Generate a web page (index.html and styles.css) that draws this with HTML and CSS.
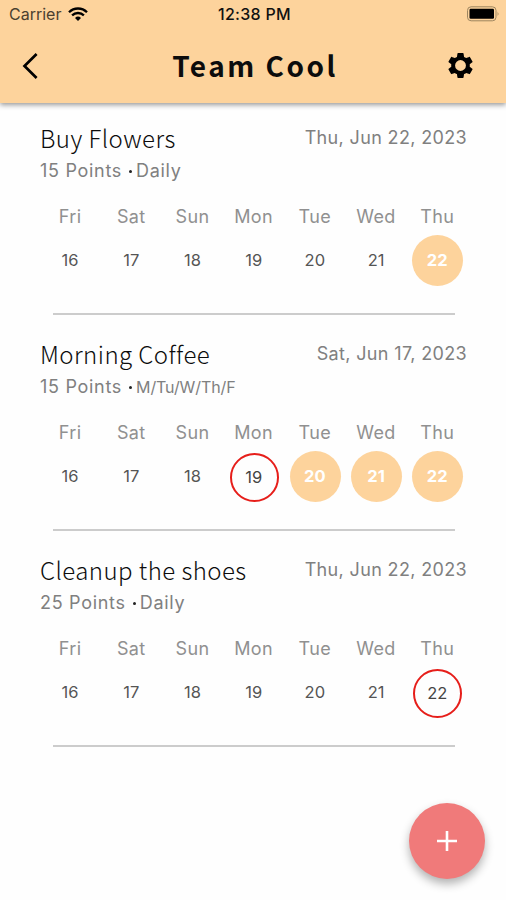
FILE: index.html
```html
<!DOCTYPE html>
<html lang="en">
<head>
    <meta charset="UTF-8">
    <meta name="viewport" content="width=device-width, initial-scale=1.0">
    <title>Team Cool</title>
    <link rel="stylesheet" href="styles.css">
</head>
<body>
    <header class="app-bar">
        <div class="status-bar">
            <div class="carrier">
                <span>Carrier</span>
                <svg class="wifi" width="20" height="14" viewBox="0 0 20 14" fill="none" stroke="#000" stroke-width="2.3">
                    <path d="M1 5.2a12.8 12.8 0 0 1 18 0"/>
                    <path d="M4.1 8.4a8.4 8.4 0 0 1 11.8 0"/>
                    <path d="M10 14l-3-3a4.3 4.3 0 0 1 6 0z" fill="#000" stroke="none"/>
                </svg>
            </div>
            <div class="clock">12:38 PM</div>
            <svg class="battery" width="33" height="16" viewBox="0 0 33 16">
                <rect x="0.5" y="0.8" width="28.5" height="14" rx="3.6" fill="none" stroke="#9d855f"/>
                <rect x="2.5" y="2.8" width="24.5" height="10" rx="1.2" fill="#000"/>
                <path d="M30.6 5.6q1.8 2.2 0 4.4z" fill="#9d855f"/>
            </svg>
        </div>
        <div class="toolbar">
            <svg class="back" width="20" height="28" viewBox="0 0 20 28" fill="none" stroke="#000" stroke-width="2.7">
                <path d="M16.6 2L4.5 14l12.1 12"/>
            </svg>
            <h1>Team Cool</h1>
            <svg class="gear" width="31" height="31" viewBox="0 0 24 24">
                <path d="M19.14 12.94c.04-.3.06-.61.06-.94 0-.32-.02-.64-.07-.94l2.03-1.58c.18-.14.23-.41.12-.61l-1.92-3.32c-.12-.22-.37-.29-.59-.22l-2.39.96c-.5-.38-1.03-.7-1.62-.94l-.36-2.54c-.04-.24-.24-.41-.48-.41h-3.84c-.24 0-.43.17-.47.41l-.36 2.54c-.59.24-1.13.57-1.62.94l-2.39-.96c-.22-.08-.47 0-.59.22L2.74 8.87c-.12.21-.08.47.12.61l2.03 1.58c-.05.3-.09.63-.09.94s.02.64.07.94l-2.03 1.58c-.18.14-.23.41-.12.61l1.92 3.32c.12.22.37.29.59.22l2.39-.96c.5.38 1.03.7 1.62.94l.36 2.54c.05.24.24.41.48.41h3.84c.24 0 .44-.17.47-.41l.36-2.54c.59-.24 1.13-.56 1.62-.94l2.39.96c.22.08.47 0 .59-.22l1.92-3.32c.12-.22.07-.47-.12-.61l-2.01-1.58zM12 16.2a4.2 4.2 0 1 1 0-8.4 4.2 4.2 0 0 1 0 8.4z"/>
            </svg>
        </div>
    </header>

    <main class="tasks">
        <section class="task">
            <div class="task-head">
                <h2>Buy Flowers</h2>
                <span class="date">Thu, Jun 22, 2023</span>
            </div>
            <div class="details"><span>15 Points</span><i class="dot"></i><span>Daily</span></div>
            <div class="week">
                <span>Fri</span><span>Sat</span><span>Sun</span><span>Mon</span><span>Tue</span><span>Wed</span><span>Thu</span>
            </div>
            <div class="days">
                <span class="day">16</span>
                <span class="day">17</span>
                <span class="day">18</span>
                <span class="day">19</span>
                <span class="day">20</span>
                <span class="day">21</span>
                <span class="day done">22</span>
            </div>
            <hr>
        </section>

        <section class="task">
            <div class="task-head">
                <h2>Morning Coffee</h2>
                <span class="date">Sat, Jun 17, 2023</span>
            </div>
            <div class="details"><span>15 Points</span><i class="dot"></i><span class="repeat">M/Tu/W/Th/F</span></div>
            <div class="week">
                <span>Fri</span><span>Sat</span><span>Sun</span><span>Mon</span><span>Tue</span><span>Wed</span><span>Thu</span>
            </div>
            <div class="days">
                <span class="day">16</span>
                <span class="day">17</span>
                <span class="day">18</span>
                <span class="day missed">19</span>
                <span class="day done">20</span>
                <span class="day done">21</span>
                <span class="day done">22</span>
            </div>
            <hr>
        </section>

        <section class="task">
            <div class="task-head">
                <h2>Cleanup the shoes</h2>
                <span class="date">Thu, Jun 22, 2023</span>
            </div>
            <div class="details"><span>25 Points</span><i class="dot"></i><span>Daily</span></div>
            <div class="week">
                <span>Fri</span><span>Sat</span><span>Sun</span><span>Mon</span><span>Tue</span><span>Wed</span><span>Thu</span>
            </div>
            <div class="days">
                <span class="day">16</span>
                <span class="day">17</span>
                <span class="day">18</span>
                <span class="day">19</span>
                <span class="day">20</span>
                <span class="day">21</span>
                <span class="day missed">22</span>
            </div>
            <hr>
        </section>
    </main>

    <button class="add" aria-label="Add task">
        <svg width="20" height="20" viewBox="0 0 20 20" stroke="#fff" stroke-width="2.6">
            <path d="M10 0v20M0 10h20"/>
        </svg>
    </button>
</body>
</html>
```
FILE: styles.css
```css
* {
    box-sizing: border-box;
}
body {
    margin: 0;
    height: 900px;
    overflow: hidden;
    background-color: #fefefe;
    font-family: Inter, sans-serif;
    color: #808080;
}
h1, h2 {
    margin: 0;
    font-family: "Noto Sans CJK JP", "Noto Sans", sans-serif;
    color: #0c0c0c;
    white-space: nowrap;
}
.app-bar {
    height: 103px;
    background-color: #fdd39c;
    box-shadow: 0 2px 5px rgba(0, 0, 0, 0.4);
}
.status-bar {
    display: grid;
    grid-template-columns: 1fr auto 1fr;
    align-items: center;
    height: 28px;
    padding: 0 6px 0 9px;
    font-size: 16px;
    color: #111;
}
.carrier {
    display: flex;
    align-items: center;
    gap: 7px;
    color: #4b402f;
}
.clock {
    font-weight: 500;
    letter-spacing: 0.3px;
}
.battery {
    justify-self: end;
}
.toolbar {
    display: grid;
    grid-template-columns: 1fr auto 1fr;
    align-items: center;
    height: 75px;
    padding: 0 20px;
}
.gear {
    justify-self: end;
    margin-right: 10px;
}
h1 {
    padding: 0 0 2px 4px;
    font-size: 28px;
    font-weight: 700;
    line-height: 40px;
    letter-spacing: 2.5px;
}
.task {
    height: 216px;
    padding: 18px 39px 0 40px;
}
.task-head {
    display: flex;
    justify-content: space-between;
    height: 36px;
}
h2 {
    font-size: 24px;
    font-weight: 300;
    line-height: 34px;
    letter-spacing: 0.45px;
}
.date {
    padding-top: 3px;
    font-size: 18px;
    line-height: 28px;
    letter-spacing: 0.35px;
}
.details {
    display: flex;
    align-items: center;
    height: 27px;
    font-size: 18px;
    letter-spacing: 0.7px;
}
.dot {
    width: 3px;
    height: 3px;
    margin: 2px 4px 0 7px;
    border-radius: 50%;
    background-color: #222;
}
.repeat {
    font-size: 16px;
    letter-spacing: -0.1px;
}
.week, .days {
    display: grid;
    grid-template-columns: repeat(7, 61.2px);
    justify-items: center;
    align-items: center;
    width: 428px;
}
.week {
    height: 26px;
    margin-top: 19px;
    margin-left: -0.5px;
    font-size: 18px;
    letter-spacing: 0.4px;
    color: #909090;
}
.days {
    height: 62px;
    font-size: 16.5px;
    color: #555;
}
.day {
    display: flex;
    align-items: center;
    justify-content: center;
    width: 51px;
    height: 51px;
    padding-right: 1px;
    border-radius: 50%;
}
.done {
    background-color: #fdd39c;
    color: #fff;
    font-weight: 700;
}
.missed {
    width: 49px;
    height: 49px;
    margin-top: 2px;
    border: 2px solid #e61e1a;
    color: #444;
}
hr {
    height: 2px;
    margin: 22px 12px 0 13px;
    border: none;
    background-color: #ccc;
}
.add {
    position: absolute;
    right: 21px;
    bottom: 21px;
    display: flex;
    align-items: center;
    justify-content: center;
    width: 76px;
    height: 76px;
    padding: 0;
    border: none;
    border-radius: 50%;
    background-color: #f07a7a;
    box-shadow: 0 5px 10px rgba(0, 0, 0, 0.3);
    cursor: pointer;
}
```
